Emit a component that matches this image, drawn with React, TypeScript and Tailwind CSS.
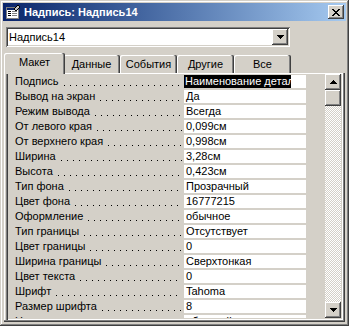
import React from "react";

const rows: [string, string][] = [
  ["Подпись", "Наименование детали"],
  ["Вывод на экран", "Да"],
  ["Режим вывода", "Всегда"],
  ["От левого края", "0,099см"],
  ["От верхнего края", "0,998см"],
  ["Ширина", "3,28см"],
  ["Высота", "0,423см"],
  ["Тип фона", "Прозрачный"],
  ["Цвет фона", "16777215"],
  ["Оформление", "обычное"],
  ["Тип границы", "Отсутствует"],
  ["Цвет границы", "0"],
  ["Ширина границы", "Сверхтонкая"],
  ["Цвет текста", "0"],
  ["Шрифт", "Tahoma"],
  ["Размер шрифта", "8"],
  ["Насыщенность", "обычный"],
];

function ArrowDown() {
  return (
    <svg width="7" height="4" viewBox="0 0 7 4" shapeRendering="crispEdges">
      <rect x="0" y="0" width="7" height="1" fill="#000" />
      <rect x="1" y="1" width="5" height="1" fill="#000" />
      <rect x="2" y="2" width="3" height="1" fill="#000" />
      <rect x="3" y="3" width="1" height="1" fill="#000" />
    </svg>
  );
}

function ArrowUp() {
  return (
    <svg width="7" height="4" viewBox="0 0 7 4" shapeRendering="crispEdges">
      <rect x="3" y="0" width="1" height="1" fill="#000" />
      <rect x="2" y="1" width="3" height="1" fill="#000" />
      <rect x="1" y="2" width="5" height="1" fill="#000" />
      <rect x="0" y="3" width="7" height="1" fill="#000" />
    </svg>
  );
}

function CloseGlyph() {
  return (
    <svg width="8" height="7" viewBox="0 0 8 7" shapeRendering="crispEdges">
      <rect x="0" y="0" width="2" height="1" fill="#000" />
      <rect x="6" y="0" width="2" height="1" fill="#000" />
      <rect x="1" y="1" width="2" height="1" fill="#000" />
      <rect x="5" y="1" width="2" height="1" fill="#000" />
      <rect x="2" y="2" width="4" height="1" fill="#000" />
      <rect x="3" y="3" width="2" height="1" fill="#000" />
      <rect x="2" y="4" width="4" height="1" fill="#000" />
      <rect x="1" y="5" width="2" height="1" fill="#000" />
      <rect x="5" y="5" width="2" height="1" fill="#000" />
      <rect x="0" y="6" width="2" height="1" fill="#000" />
      <rect x="6" y="6" width="2" height="1" fill="#000" />
    </svg>
  );
}

function SheetIcon() {
  return (
    <svg width="16" height="16" viewBox="0 0 16 16" shapeRendering="crispEdges">
      <rect x="1.5" y="3.5" width="12" height="11" fill="#fff" stroke="#808080" strokeWidth="1" />
      <rect x="2" y="4" width="11" height="2" fill="#0a246a" />
      <rect x="3" y="7" width="3" height="1" fill="#000" />
      <rect x="7" y="7" width="5" height="1" fill="#808080" />
      <rect x="3" y="9" width="3" height="1" fill="#000" />
      <rect x="7" y="9" width="5" height="1" fill="#808080" />
      <rect x="3" y="11" width="3" height="1" fill="#000" />
      <rect x="7" y="11" width="5" height="1" fill="#808080" />
      <path d="M9 5 L13 1 L15 3 L11 7 Z" fill="#c0c0c0" stroke="#000" strokeWidth="1" />
    </svg>
  );
}

const raisedBtn =
  "shadow-[inset_-1px_-1px_0_#404040,inset_1px_1px_0_#ffffff,inset_-2px_-2px_0_#808080,inset_2px_2px_0_#d4d0c8]";

export default function App() {
  const tabs = ["Макет", "Данные", "События", "Другие", "Все"];
  return (
    <div className="w-[349px] h-[326px] bg-[#d4d0c8] p-[3px] flex flex-col overflow-hidden font-['Liberation_Sans',Arial,sans-serif] text-[11px] text-black shadow-[inset_-1px_-1px_0_#404040,inset_1px_1px_0_#d4d0c8,inset_-2px_-2px_0_#808080,inset_2px_2px_0_#ffffff]">
      {/* Title bar */}
      <div className="h-[18px] shrink-0 flex items-center bg-gradient-to-r from-[#0a246a] to-[#a6caf0] pl-[2px] pr-[2px]">
        <SheetIcon />
        <span className="ml-[3px] text-white font-bold text-[11px] leading-[13px] whitespace-nowrap">
          Надпись: Надпись14
        </span>
        <div className={`ml-auto w-[16px] h-[14px] bg-[#d4d0c8] flex items-center justify-center ${raisedBtn}`}>
          <CloseGlyph />
        </div>
      </div>

      {/* Combo */}
      <div className="mt-[6px] ml-[3px] w-[284px] h-[20px] shrink-0 bg-white flex items-center p-[2px] shadow-[inset_1px_1px_0_#808080,inset_-1px_-1px_0_#ffffff,inset_2px_2px_0_#404040,inset_-2px_-2px_0_#d4d0c8]">
        <span className="flex-1 pl-[1px] leading-[13px]">Надпись14</span>
        <div className={`w-[16px] h-[16px] bg-[#d4d0c8] flex items-center justify-center ${raisedBtn}`}>
          <ArrowDown />
        </div>
      </div>

      {/* Tabs */}
      <div className="mt-[6px] h-[20px] shrink-0 flex items-end pl-[3px] relative z-10">
        {tabs.map((t, i) =>
          i === 0 ? (
            <div
              key={t}
              className="w-[61px] h-[21px] -ml-[2px] -mr-[2px] -mb-[1px] relative z-10 bg-[#d4d0c8] rounded-t-[2px] pt-[3px] text-center leading-[13px] shadow-[inset_-1px_0_0_#404040,inset_-2px_0_0_#808080,inset_1px_1px_0_#ffffff]"
            >
              {t}
            </div>
          ) : (
            <div
              key={t}
              className="w-[57px] h-[18px] bg-[#d4d0c8] rounded-t-[2px] pt-[3px] text-center leading-[13px] shadow-[inset_-1px_0_0_#404040,inset_-2px_0_0_#808080,inset_1px_1px_0_#ffffff]"
            >
              {t}
            </div>
          )
        )}
      </div>

      {/* Panel */}
      <div className="flex-1 min-h-0 ml-[1px] mr-[1px] mb-[1px] pt-[1px] pl-[2px] pr-[2px] pb-[2px] flex shadow-[inset_-1px_-1px_0_#404040,inset_-2px_-2px_0_#808080,inset_1px_1px_0_#ffffff]">
        <div className="flex-1 min-h-0 flex pl-[2px] pr-[2px] pb-[2px] overflow-hidden shadow-[inset_1px_0_0_#808080,inset_2px_0_0_#404040,inset_-1px_-1px_0_#ffffff,inset_-2px_-2px_0_#d4d0c8]">
          {/* Rows */}
          <div className="flex-1 min-w-0 pt-[1px] overflow-hidden">
            {rows.map(([label, value], i) => (
              <div key={label} className="h-[15px] flex pl-[7px]">
                <div className="w-[169px] h-[13px] flex whitespace-nowrap leading-[13px] pr-[2px]">
                  <span>{label}</span>
                  <span className="flex-1 ml-[3px] h-[13px] bg-[linear-gradient(90deg,#000_1px,transparent_1px)] bg-[length:6px_1px] bg-repeat-x bg-[position:2px_10px]" />
                </div>
                <div className="w-[122px] h-[13px] bg-white leading-[13px] whitespace-nowrap overflow-hidden">
                  {i === 0 ? (
                    <span className="inline-block h-[13px] max-w-[107px] overflow-hidden bg-black text-white pl-[1px] align-top">
                      {value}
                    </span>
                  ) : (
                    <span className="pl-[2px]">{value}</span>
                  )}
                </div>
              </div>
            ))}
          </div>
          {/* Scrollbar */}
          <div className="w-[16px] flex flex-col shrink-0">
            <div className={`h-[16px] bg-[#d4d0c8] flex items-center justify-center ${raisedBtn}`}>
              <ArrowUp />
            </div>
            <div className={`h-[16px] bg-[#d4d0c8] ${raisedBtn}`} />
            <div className="flex-1 bg-[repeating-conic-gradient(#ffffff_0_25%,#d4d0c8_0_50%)] bg-[length:2px_2px]" />
            <div className={`h-[16px] bg-[#d4d0c8] flex items-center justify-center ${raisedBtn}`}>
              <ArrowDown />
            </div>
          </div>
        </div>
      </div>
    </div>
  );
}
